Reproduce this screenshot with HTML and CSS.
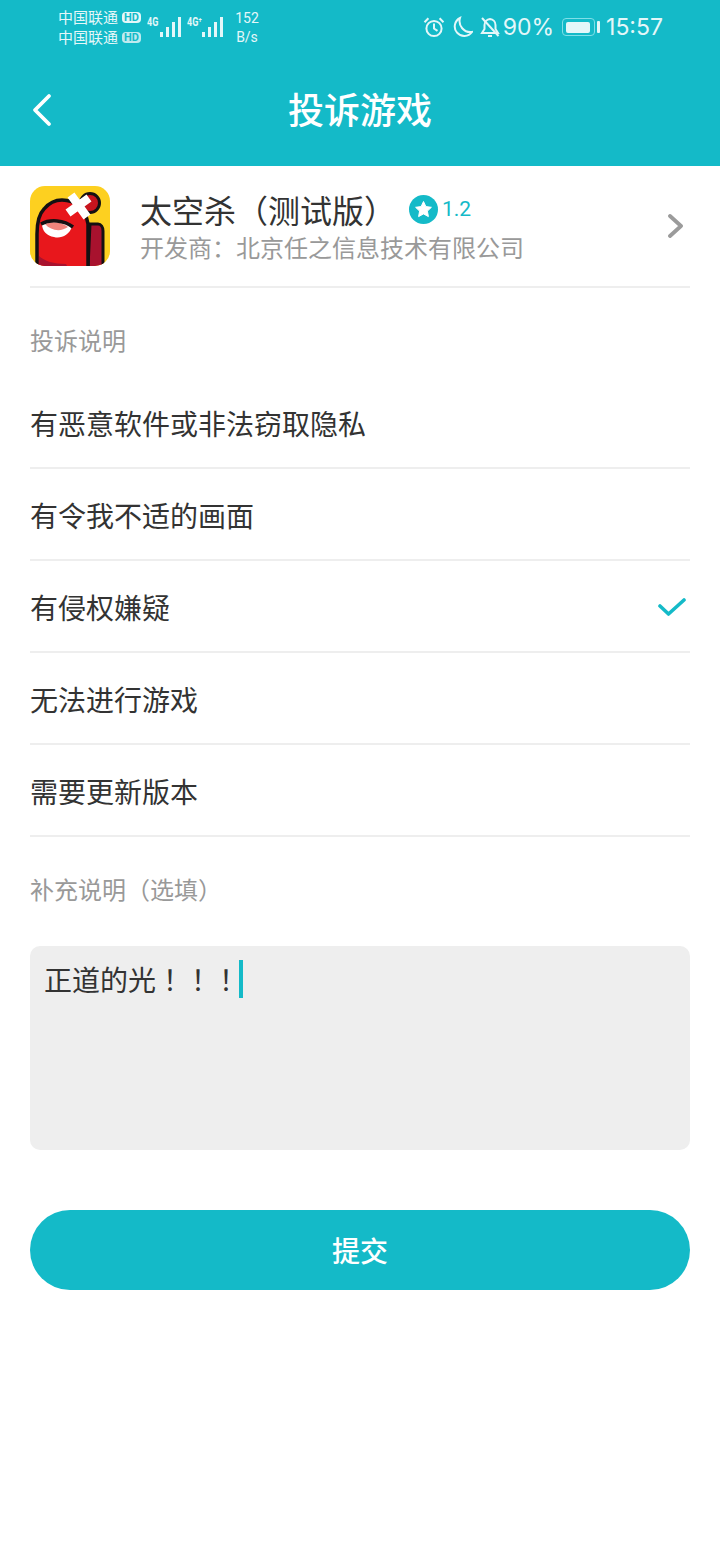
FILE: index.html
```html
<!DOCTYPE html>
<html lang="zh-CN">
<head>
    <meta charset="UTF-8">
    <meta name="viewport" content="width=device-width, initial-scale=1.0">
    <title>投诉游戏</title>
    <link rel="stylesheet" href="styles.css">
</head>
<body>
    <div class="header">
        <div class="status-bar">
            <div class="carriers">
                <div class="carrier">中国联通<span class="hd">HD</span></div>
                <div class="carrier">中国联通<span class="hd dim">HD</span></div>
            </div>
            <div class="signal">
                <span class="net">4G</span>
                <svg width="21" height="20" viewBox="0 0 21 20"><g fill="#e4f7f9"><rect x="0" y="15" width="3" height="5"/><rect x="6" y="10" width="3" height="10"/><rect x="12" y="5" width="3" height="15"/><rect x="18" y="0" width="3" height="20"/></g></svg>
            </div>
            <div class="signal second">
                <span class="net">4G⁺</span>
                <svg width="21" height="20" viewBox="0 0 21 20"><g fill="#e4f7f9"><rect x="0" y="15" width="3" height="5"/><rect x="6" y="10" width="3" height="10"/><rect x="12" y="5" width="3" height="15"/><rect x="18" y="0" width="3" height="20"/></g></svg>
            </div>
            <div class="speed">152<br>B/s</div>
            <div class="status-right">
                <svg class="st-icon" width="22" height="22" viewBox="0 0 22 22" fill="none" stroke="#e4f7f9" stroke-width="2"><circle cx="11" cy="12.5" r="7.6"/><path d="M11 7.5V12.5L14.5 14.8"/><path d="M1.5 6.2 5.4 2.2M20.5 6.2 16.6 2.2"/></svg>
                <svg class="st-icon" width="22" height="22" viewBox="0 0 22 22" fill="none" stroke="#e4f7f9" stroke-width="2"><path d="M9 2A9.5 9.5 0 1 0 21 16 11 11 0 0 1 9 2Z"/></svg>
                <svg class="st-icon" width="22" height="22" viewBox="0 0 22 22" fill="none" stroke="#e4f7f9" stroke-width="2"><path d="M11 3A6 6 0 0 0 5.500 9V13L3 17H19L16.500 13V9A6 6 0 0 0 11 3Z"/><path d="M9 20H13"/><path d="M3 2 19.500 20"/></svg>
                <span class="pct">90%</span>
                <div class="battery"><div class="battery-fill"></div></div>
                <div class="battery-cap"></div>
                <span class="clock">15:57</span>
            </div>
        </div>
        <div class="nav-bar">
            <svg class="back" width="24" height="36" viewBox="0 0 24 36" fill="none" stroke="#fff" stroke-width="3.8" stroke-linecap="round" stroke-linejoin="round"><path d="M19 4 5 18 19 32"/></svg>
            <h1>投诉游戏</h1>
        </div>
    </div>

    <div class="content">
        <div class="game-row">
            <svg class="game-icon" width="80" height="80" viewBox="0 0 80 80">
                <defs><clipPath id="iconclip"><rect width="80" height="80" rx="15"/></clipPath></defs>
                <g clip-path="url(#iconclip)">
                    <rect width="80" height="80" fill="#fdd020"/>
                    <circle cx="60" cy="17" r="9.500" fill="#c8141e" stroke="#141012" stroke-width="3"/>
                    <path d="M60 38H68C71 38 73 41 73 45V82H58Z" fill="#a8122e" stroke="#141012" stroke-width="3"/>
                    <path d="M7 82V48C7 36 9 28 14 23C19 17 26 14 32 14C46 14 56 24 58 38V82Z" fill="#e8171c" stroke="#141012" stroke-width="3.5"/>
                    <path d="M9 70C14 75 24 78 36 78L38 82H9Z" fill="#a8122e"/>
                    <path d="M12 38C20 34 34 35 42 41C39 49 31 53 24 51C17 50 12 45 12 38Z" fill="#fff"/>
                    <path d="M15 38C22 35 32 36 38 41C31 46 21 45 15 38Z" fill="#f0847c"/>
                    <path d="M11 38C20 33 34 34 43 41" stroke="#141012" stroke-width="3.500" fill="none"/>
                    <path d="M41 9 57 31M38 27 59 12" stroke="#fff" stroke-width="8.500" fill="none"/>
                </g>
            </svg>
            <div class="game-info">
                <div class="game-title">
                    <span class="game-name">太空杀（测试版）</span>
                    <svg class="star-badge" width="29" height="29" viewBox="0 0 29 29"><circle cx="14.5" cy="14.5" r="14.5" fill="#14bac8"/><path d="M14.5 6.5 16.9 11.6 22.4 12.3 18.4 16.1 19.4 21.6 14.5 18.9 9.6 21.6 10.6 16.1 6.6 12.3 12.1 11.6Z" fill="#fff" stroke="#fff" stroke-width="1" stroke-linejoin="round"/></svg>
                    <span class="score">1.2</span>
                </div>
                <div class="developer">开发商：北京任之信息技术有限公司</div>
            </div>
            <svg class="chevron" width="15" height="24" viewBox="0 0 15 24" fill="none" stroke="#9b9b9b" stroke-width="3.8" stroke-linecap="round" stroke-linejoin="round"><path d="M2 2 13 12 2 22"/></svg>
        </div>

        <div class="section-label first">投诉说明</div>
        <div class="option">有恶意软件或非法窃取隐私</div>
        <div class="option">有令我不适的画面</div>
        <div class="option">有侵权嫌疑
            <svg class="check" width="28" height="18" viewBox="0 0 28 18" fill="none" stroke="#14bac8" stroke-width="3.6" stroke-linecap="round" stroke-linejoin="round"><path d="M2 8 10.500 16 26 2"/></svg>
        </div>
        <div class="option">无法进行游戏</div>
        <div class="option">需要更新版本</div>

        <div class="section-label second">补充说明（选填）</div>
        <div class="text-box">正道的光<span class="bang">！！！</span><span class="cursor"></span></div>
        <button class="btn-submit">提交</button>
    </div>
</body>
</html>
```

FILE: styles.css
```css
/* General */
body {
    font-family: 'Noto Sans CJK SC', 'Roboto', sans-serif;
    margin: 0;
    padding: 0;
    background: #ffffff;
    color: #333333;
}

/* Header */
.header {
    background-color: #14bac8;
    height: 166px;
    color: #ffffff;
}

.status-bar {
    display: flex;
    height: 54px;
    padding-left: 58px;
    padding-right: 57px;
    box-sizing: border-box;
}

.carriers {
    padding-top: 7px;
    width: 84px;
    font-size: 15px;
    line-height: 20px;
    color: #e4f7f9;
}

.carrier {
    display: flex;
    align-items: center;
    white-space: nowrap;
}

.hd {
    margin-left: 4px;
    width: 19px;
    height: 11px;
    line-height: 11px;
    text-align: center;
    font-family: 'Roboto', sans-serif;
    font-size: 11px;
    font-weight: 700;
    background: #e4f7f9;
    color: #14bac8;
    border-radius: 4px;
}

.hd.dim {
    background: #bfeaef;
}

.signal {
    display: flex;
    margin-left: 5px;
    padding-top: 17px;
}

.signal.second {
    margin-left: 6px;
}

.net {
    width: 13px;
    height: 11px;
    font-family: 'Roboto', sans-serif;
    font-size: 12px;
    font-weight: 700;
    line-height: 11px;
    color: #e4f7f9;
    white-space: nowrap;
    transform: scaleX(0.75);
    transform-origin: left;
}

.signal.second .net {
    width: 15px;
}

.speed {
    width: 26px;
    margin-left: 11px;
    font-family: 'Roboto', sans-serif;
    font-size: 14px;
    line-height: 19px;
    padding-top: 9px;
    text-align: center;
    color: #e4f7f9;
}

.status-right {
    display: flex;
    align-items: center;
    margin-left: auto;
    height: 54px;
    color: #e4f7f9;
}

.st-icon {
    margin-right: 6px;
}

.pct {
    font-family: 'Inter', sans-serif;
    font-size: 23px;
    margin-left: -4px;
}

.battery {
    display: flex;
    align-items: center;
    width: 33px;
    height: 18px;
    margin-left: 8px;
    padding-left: 3px;
    border: 1.5px solid #7fdfe8;
    border-radius: 4px;
    box-sizing: border-box;
}

.battery-fill {
    width: 24px;
    height: 11px;
    background: #e4f7f9;
    border-radius: 2px;
}

.battery-cap {
    width: 3px;
    height: 12px;
    margin-left: 2px;
    background: #e4f7f9;
    border-radius: 1px;
}

.clock {
    font-family: 'Inter', sans-serif;
    font-size: 23px;
    margin-left: 6px;
}

/* Nav */
.nav-bar {
    position: relative;
    height: 112px;
}

.nav-bar h1 {
    margin: 0;
    padding-top: 27px;
    font-size: 36px;
    line-height: 54px;
    font-weight: 500;
    text-align: center;
}

.back {
    position: absolute;
    left: 30px;
    top: 38px;
}

/* Content */
.content {
    padding: 0 30px;
}

.game-row {
    display: flex;
    align-items: center;
    height: 122px;
    box-sizing: border-box;
    border-bottom: 2px solid #eeeeee;
}

.game-icon {
    flex-shrink: 0;
}

.game-info {
    flex: 1;
    margin-left: 30px;
    margin-top: -4px;
}

.game-title {
    display: flex;
    align-items: center;
    height: 46px;
}

.game-name {
    font-size: 32px;
    line-height: 46px;
    white-space: nowrap;
}

.star-badge {
    margin-left: 13px;
}

.score {
    margin-left: 4px;
    font-family: 'Roboto', sans-serif;
    font-size: 21px;
    color: #14bac8;
}

.developer {
    font-size: 24px;
    line-height: 30px;
    color: #999999;
}

.chevron {
    margin-right: 7px;
}

.section-label {
    font-size: 24px;
    line-height: 34px;
    color: #999999;
}

.section-label.first {
    padding-top: 35px;
    padding-bottom: 20px;
}

.section-label.second {
    padding-top: 35px;
    padding-bottom: 40px;
}

.option {
    display: flex;
    align-items: center;
    justify-content: space-between;
    height: 92px;
    box-sizing: border-box;
    padding-top: 2px;
    border-bottom: 2px solid #eeeeee;
    font-size: 28px;
    color: #333333;
}

.check {
    margin-right: 4px;
}

.text-box {
    height: 204px;
    padding: 12px 14px;
    box-sizing: border-box;
    background: #eeeeee;
    border-radius: 10px;
    display: flex;
    align-items: flex-start;
    font-size: 28px;
    line-height: 42px;
}

.bang {
    font-family: 'Noto Sans CJK TC', sans-serif;
}

.cursor {
    display: inline-block;
    width: 4px;
    height: 38px;
    margin-top: 2px;
    margin-left: -1px;
    background: #14bac8;
}

/* Buttons */
.btn-submit {
    display: block;
    width: 100%;
    height: 80px;
    margin-top: 60px;
    font-family: inherit;
    font-size: 28px;
    font-weight: 500;
    border: none;
    border-radius: 40px;
    background-color: #14bac8;
    color: #fff;
}
```
